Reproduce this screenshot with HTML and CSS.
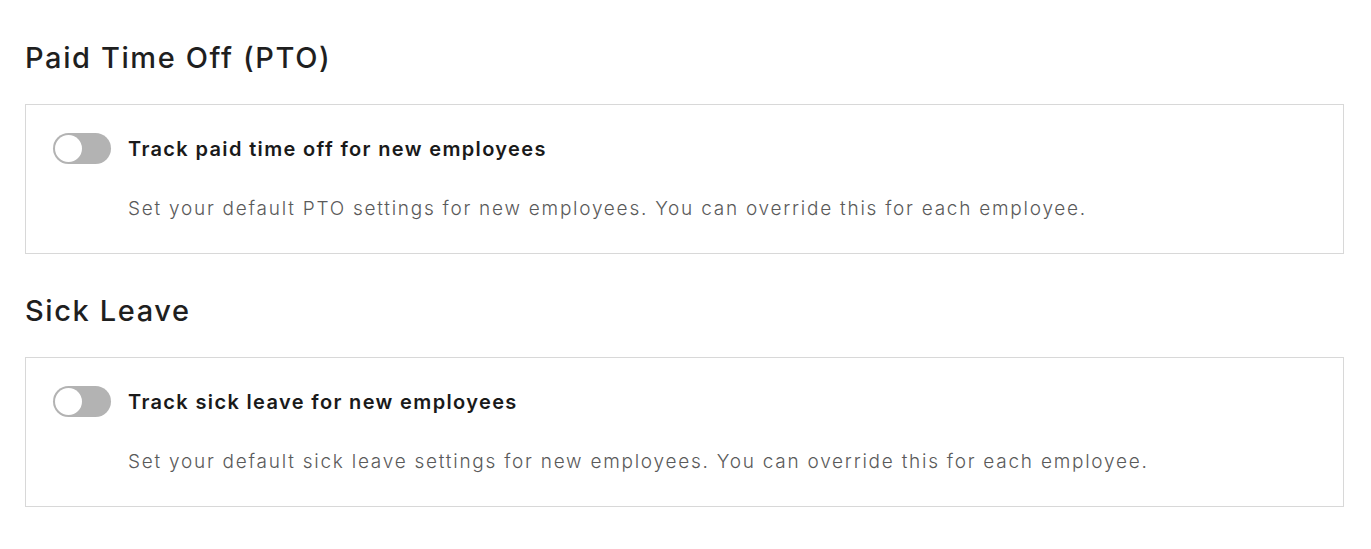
FILE: index.html
```html
<!DOCTYPE html>
<html lang="en">
<head>
<meta charset="utf-8">
<title>Time Off</title>
<link rel="stylesheet" href="styles.css">
</head>
<body>
<main class="page">
  <section class="section">
    <h2 class="section-title">Paid Time Off (PTO)</h2>
    <div class="card">
      <div class="toggle-row">
        <span class="toggle" role="switch" aria-checked="false"><span class="knob"></span></span>
        <span class="toggle-label">Track paid time off for new employees</span>
      </div>
      <p class="desc">Set your default PTO settings for new employees. You can override this for each employee.</p>
    </div>
  </section>
  <section class="section">
    <h2 class="section-title">Sick Leave</h2>
    <div class="card">
      <div class="toggle-row">
        <span class="toggle" role="switch" aria-checked="false"><span class="knob"></span></span>
        <span class="toggle-label">Track sick leave for new employees</span>
      </div>
      <p class="desc">Set your default sick leave settings for new employees. You can override this for each employee.</p>
    </div>
  </section>
</main>
</body>
</html>
```

FILE: styles.css
```css
* { box-sizing: border-box; }
html, body { margin: 0; padding: 0; background: #fff; }
body { font-family: Inter, "Open Sans", "Liberation Sans", sans-serif; color: #1c1c1c; }

.page {
  padding: 40px 27px 0 25px;
}

.section + .section { margin-top: 39px; }

.section-title {
  margin: 0 0 28px;
  font-size: 29px;
  line-height: 36px;
  font-weight: 500;
  letter-spacing: 1.6px;
  color: #1f1f1f;
}

.card {
  border: 1px solid #d8d8d8;
  padding: 28px 27px 30px 27px;
}

.toggle-row {
  display: flex;
  align-items: center;
  gap: 17px;
}

.toggle {
  flex: none;
  width: 58px;
  height: 31px;
  border-radius: 16px;
  background: #b3b3b3;
  display: flex;
  align-items: center;
  padding: 2px;
}

.knob {
  width: 27px;
  height: 27px;
  border-radius: 50%;
  background: #fff;
}

.toggle-label {
  font-size: 20px;
  font-weight: 600;
  letter-spacing: 1.35px;
  color: #1a1a1a;
}

.desc {
  margin: 31px 0 0 75px;
  font-size: 19px;
  line-height: 28px;
  font-weight: 300;
  letter-spacing: 1.75px;
  color: #5a5a5a;
}
```
